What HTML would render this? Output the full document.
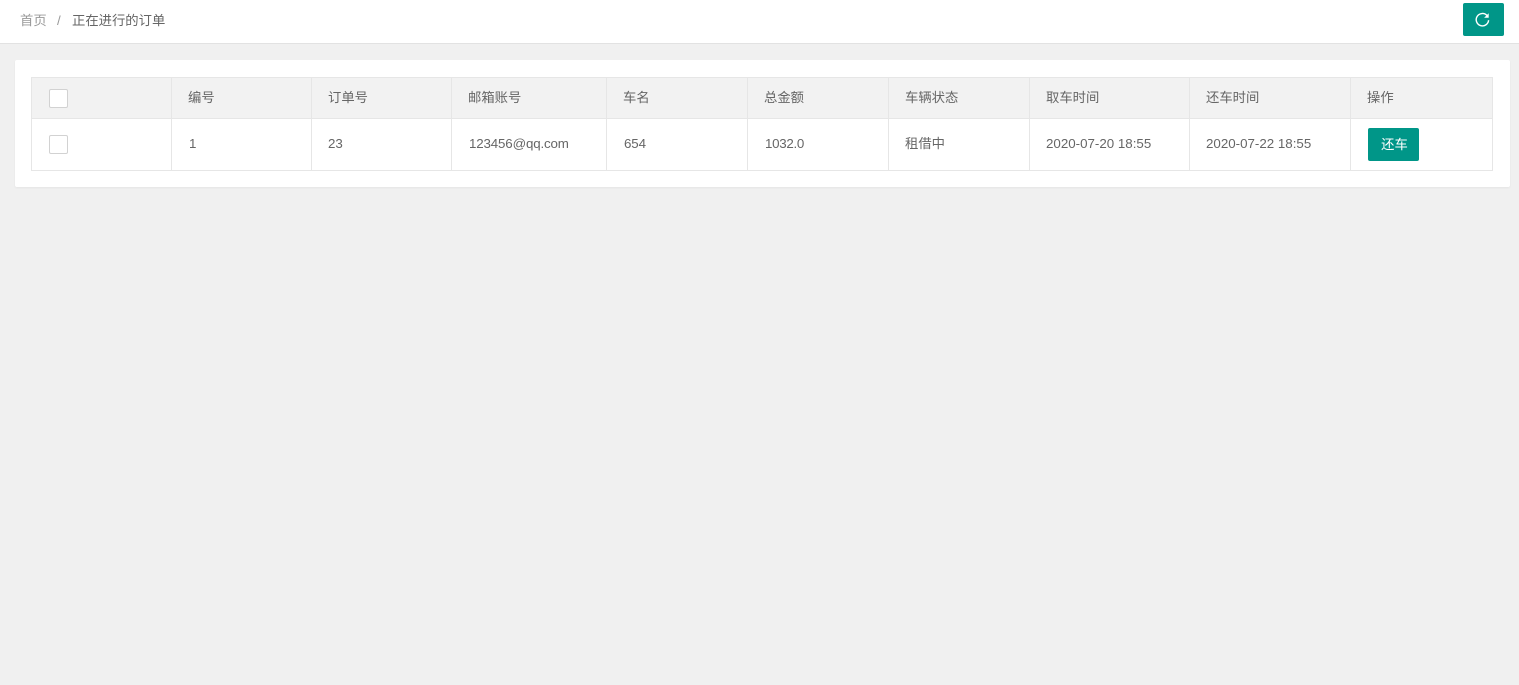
<!DOCTYPE html>
<html lang="zh">
<head>
<meta charset="utf-8">
<title>正在进行的订单</title>
<style>
html,body{margin:0;padding:0;width:1519px;height:685px;overflow:hidden;background:#f0f0f0;font-family:"Liberation Sans","Noto Sans CJK SC",sans-serif;font-size:13.33px;color:#666}
div,span{position:absolute;box-sizing:border-box}
.t{white-space:nowrap;line-height:20px;height:20px}
.line{background:#e6e6e6}
.cb{width:19px;height:19px;left:49px;background:#fff;border:1px solid #d2d2d2;border-radius:2px}
</style>
</head>
<body>
<div style="left:0;top:0;width:1519px;height:44px;background:#fff;border-bottom:1px solid #e2e2e2"></div>
<span class="t" style="left:20px;top:10.5px;color:#999">首页</span>
<span class="t" style="left:57px;top:10.5px;color:#999">/</span>
<span class="t" style="left:72px;top:10.5px;color:#666">正在进行的订单</span>
<div style="left:1463px;top:3px;width:41px;height:33px;background:#009688;border-radius:2px">
<svg width="41" height="33" viewBox="0 0 41 33" style="position:absolute;left:0;top:0"><path d="M23.9 12.4A6.2 6.2 0 1 0 25.6 17.2" fill="none" stroke="#fff" stroke-width="1.4"/><path d="M25.7 10.2v4.6h-4.6z" fill="#fff"/></svg>
</div>

<div style="left:15px;top:60px;width:1495px;height:127px;background:#fff;border-radius:2px;box-shadow:0 1px 2px rgba(0,0,0,.05)"></div>
<div style="left:31px;top:77px;width:1462px;height:94px;background:#fff;border:1px solid #e6e6e6"></div>
<div style="left:32px;top:78px;width:1460px;height:40px;background:#f2f2f2"></div>
<div class="line" style="left:32px;top:118px;width:1460px;height:1px"></div>
<div class="line" style="left:171px;top:78px;width:1px;height:92px"></div>
<div class="line" style="left:311px;top:78px;width:1px;height:92px"></div>
<div class="line" style="left:451px;top:78px;width:1px;height:92px"></div>
<div class="line" style="left:606px;top:78px;width:1px;height:92px"></div>
<div class="line" style="left:747px;top:78px;width:1px;height:92px"></div>
<div class="line" style="left:888px;top:78px;width:1px;height:92px"></div>
<div class="line" style="left:1029px;top:78px;width:1px;height:92px"></div>
<div class="line" style="left:1189px;top:78px;width:1px;height:92px"></div>
<div class="line" style="left:1350px;top:78px;width:1px;height:92px"></div>

<div class="cb" style="top:89px"></div>
<div class="cb" style="top:135px"></div>

<span class="t" style="left:188px;top:87.5px">编号</span>
<span class="t" style="left:328px;top:87.5px">订单号</span>
<span class="t" style="left:468px;top:87.5px">邮箱账号</span>
<span class="t" style="left:623px;top:87.5px">车名</span>
<span class="t" style="left:764px;top:87.5px">总金额</span>
<span class="t" style="left:905px;top:87.5px">车辆状态</span>
<span class="t" style="left:1046px;top:87.5px">取车时间</span>
<span class="t" style="left:1206px;top:87.5px">还车时间</span>
<span class="t" style="left:1367px;top:87.5px">操作</span>

<span class="t" style="left:189px;top:134px">1</span>
<span class="t" style="left:328px;top:134px">23</span>
<span class="t" style="left:469px;top:134px;letter-spacing:-.15px">123456@qq.com</span>
<span class="t" style="left:624px;top:134px;letter-spacing:-.1px">654</span>
<span class="t" style="left:765px;top:134px;letter-spacing:-.3px">1032.0</span>
<span class="t" style="left:905px;top:134px">租借中</span>
<span class="t" style="left:1046px;top:134px">2020-07-20 18:55</span>
<span class="t" style="left:1206px;top:134px">2020-07-22 18:55</span>
<div style="left:1368px;top:128px;width:51px;height:33px;background:#009688;border-radius:2px;color:#fff;text-align:center;line-height:33px;font-size:13.33px;padding-left:2px">还车</div>
</body>
</html>
